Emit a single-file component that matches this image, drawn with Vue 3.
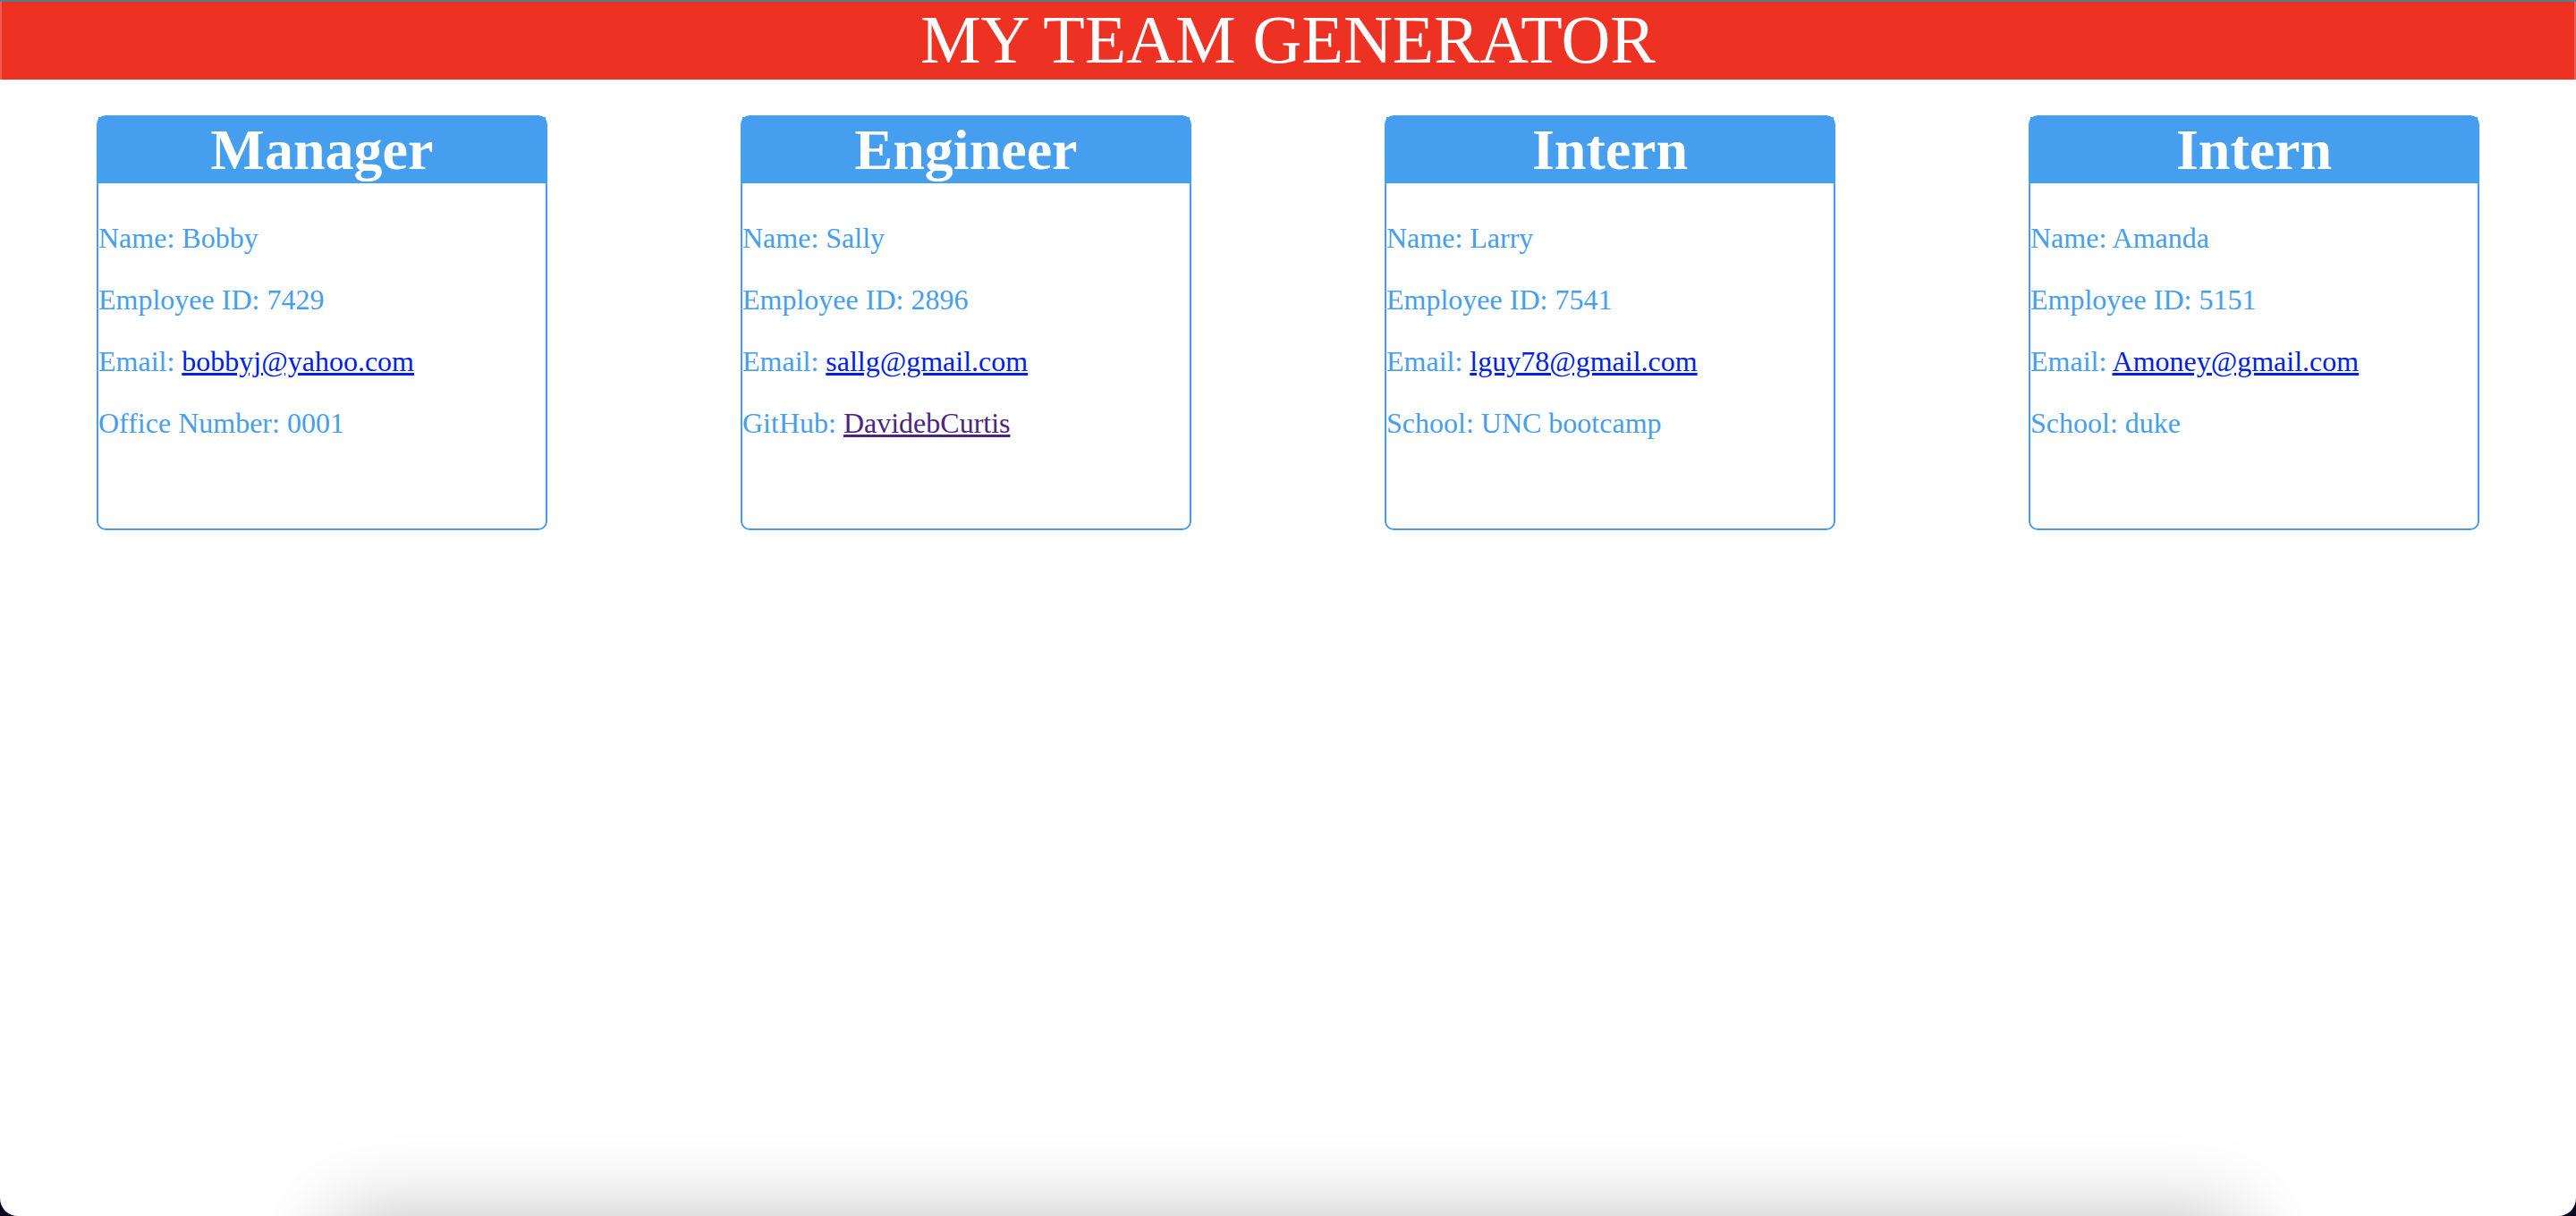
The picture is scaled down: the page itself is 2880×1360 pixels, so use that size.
<script setup>
const team = [
  { role: 'Manager', name: 'Bobby', id: '7429', email: 'bobbyj@yahoo.com', label: 'Office Number', value: '0001' },
  { role: 'Engineer', name: 'Sally', id: '2896', email: 'sallg@gmail.com', label: 'GitHub', value: 'DavidebCurtis', link: 'https://github.com/DavidebCurtis' },
  { role: 'Intern', name: 'Larry', id: '7541', email: 'lguy78@gmail.com', label: 'School', value: 'UNC bootcamp' },
  { role: 'Intern', name: 'Amanda', id: '5151', email: 'Amoney@gmail.com', label: 'School', value: 'duke' },
]
</script>

<template>
  <div class="window">
    <header class="banner">MY TEAM GENERATOR</header>
    <main class="team">
      <section v-for="member in team" :key="member.id" class="card">
        <h1 class="role">{{ member.role }}</h1>
        <p>Name: {{ member.name }}</p>
        <p>Employee ID: {{ member.id }}</p>
        <p>Email: <a :href="'mailto:' + member.email">{{ member.email }}</a></p>
        <p>{{ member.label }}: <a v-if="member.link" class="seen" :href="member.link">{{ member.value }}</a><template v-else>{{ member.value }}</template></p>
      </section>
    </main>
    <div class="shade"></div>
  </div>
</template>

<style>
body {
  background: #07031f;
}
</style>

<style scoped>
.window {
  position: relative;
  box-sizing: border-box;
  min-height: 100vh;
  overflow: hidden;
  background: #fff;
  border-radius: 0 0 20px 20px;
  font-family: "Liberation Serif", "Times New Roman", serif;
  font-size: 32px;
  line-height: 37px;
}
.banner {
  padding: 1px 0 2px;
  background: #ed3224;
  box-shadow: inset 0 2px #4f7f88, inset 2px 0 #f05c50, inset -2px 0 #f05c50;
  color: #fff;
  font-size: 76px;
  line-height: 86px;
  text-align: center;
}
.team {
  display: flex;
  justify-content: space-around;
  padding-top: 40px;
}
.card {
  box-sizing: border-box;
  width: 17.5%;
  padding-bottom: 99px;
  border: 2px solid #459eee;
  border-radius: 10px;
  color: #459eee;
}
.role {
  margin: 0 0 43px;
  background: #459eee;
  color: #fff;
  font-size: 64px;
  line-height: 74px;
  text-align: center;
}
p {
  margin: 0 0 32px;
}
p:last-child {
  margin-bottom: 0;
}
a {
  color: #001ee6;
  text-decoration-thickness: 3px;
}
.seen {
  color: #4c2484;
}
/* soft shadow rising from below the bottom edge */
.shade {
  position: absolute;
  left: 13%;
  right: 13%;
  bottom: -200px;
  height: 200px;
  border-radius: 20px;
  box-shadow: 0 0 90px rgba(0, 0, 0, 0.25);
}
</style>
